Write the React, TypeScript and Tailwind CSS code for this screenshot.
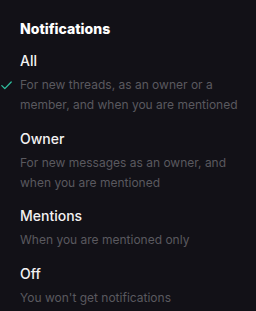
const options = [
  { title: 'All', desc: 'For new threads, as an owner or a member, and when you are mentioned', checked: true },
  { title: 'Owner', desc: 'For new messages as an owner, and when you are mentioned' },
  { title: 'Mentions', desc: 'When you are mentioned only' },
  { title: 'Off', desc: "You won't get notifications" },
]

export default function App() {
  return (
    <div
      className="h-[311px] w-[256px] bg-[#121117] pl-5 pr-3 pt-[19px]"
      style={{ fontFamily: 'Inter, "Noto Sans", sans-serif' }}
    >
      <h2 className="text-[14px] font-extrabold leading-[20px] text-white">Notifications</h2>
      <div className="mt-[12px] flex flex-col gap-[13.5px]">
        {options.map((o) => (
          <div key={o.title} className="relative">
            <div className="text-[14px] font-medium leading-[20px] text-[#f2f2f2]">{o.title}</div>
            <p className="mt-[4px] text-[12px] leading-[20px] text-[#5a595f]">{o.desc}</p>
            {o.checked && (
              <svg
                className="absolute -left-[19px] top-[30px]"
                width="11"
                height="9"
                viewBox="0 0 11 9"
                fill="none"
              >
                <path d="M0.8 4.6l3 3L10.2 1" stroke="#2fbf9f" strokeWidth="1.3" strokeLinecap="round" strokeLinejoin="round" />
              </svg>
            )}
          </div>
        ))}
      </div>
    </div>
  )
}
